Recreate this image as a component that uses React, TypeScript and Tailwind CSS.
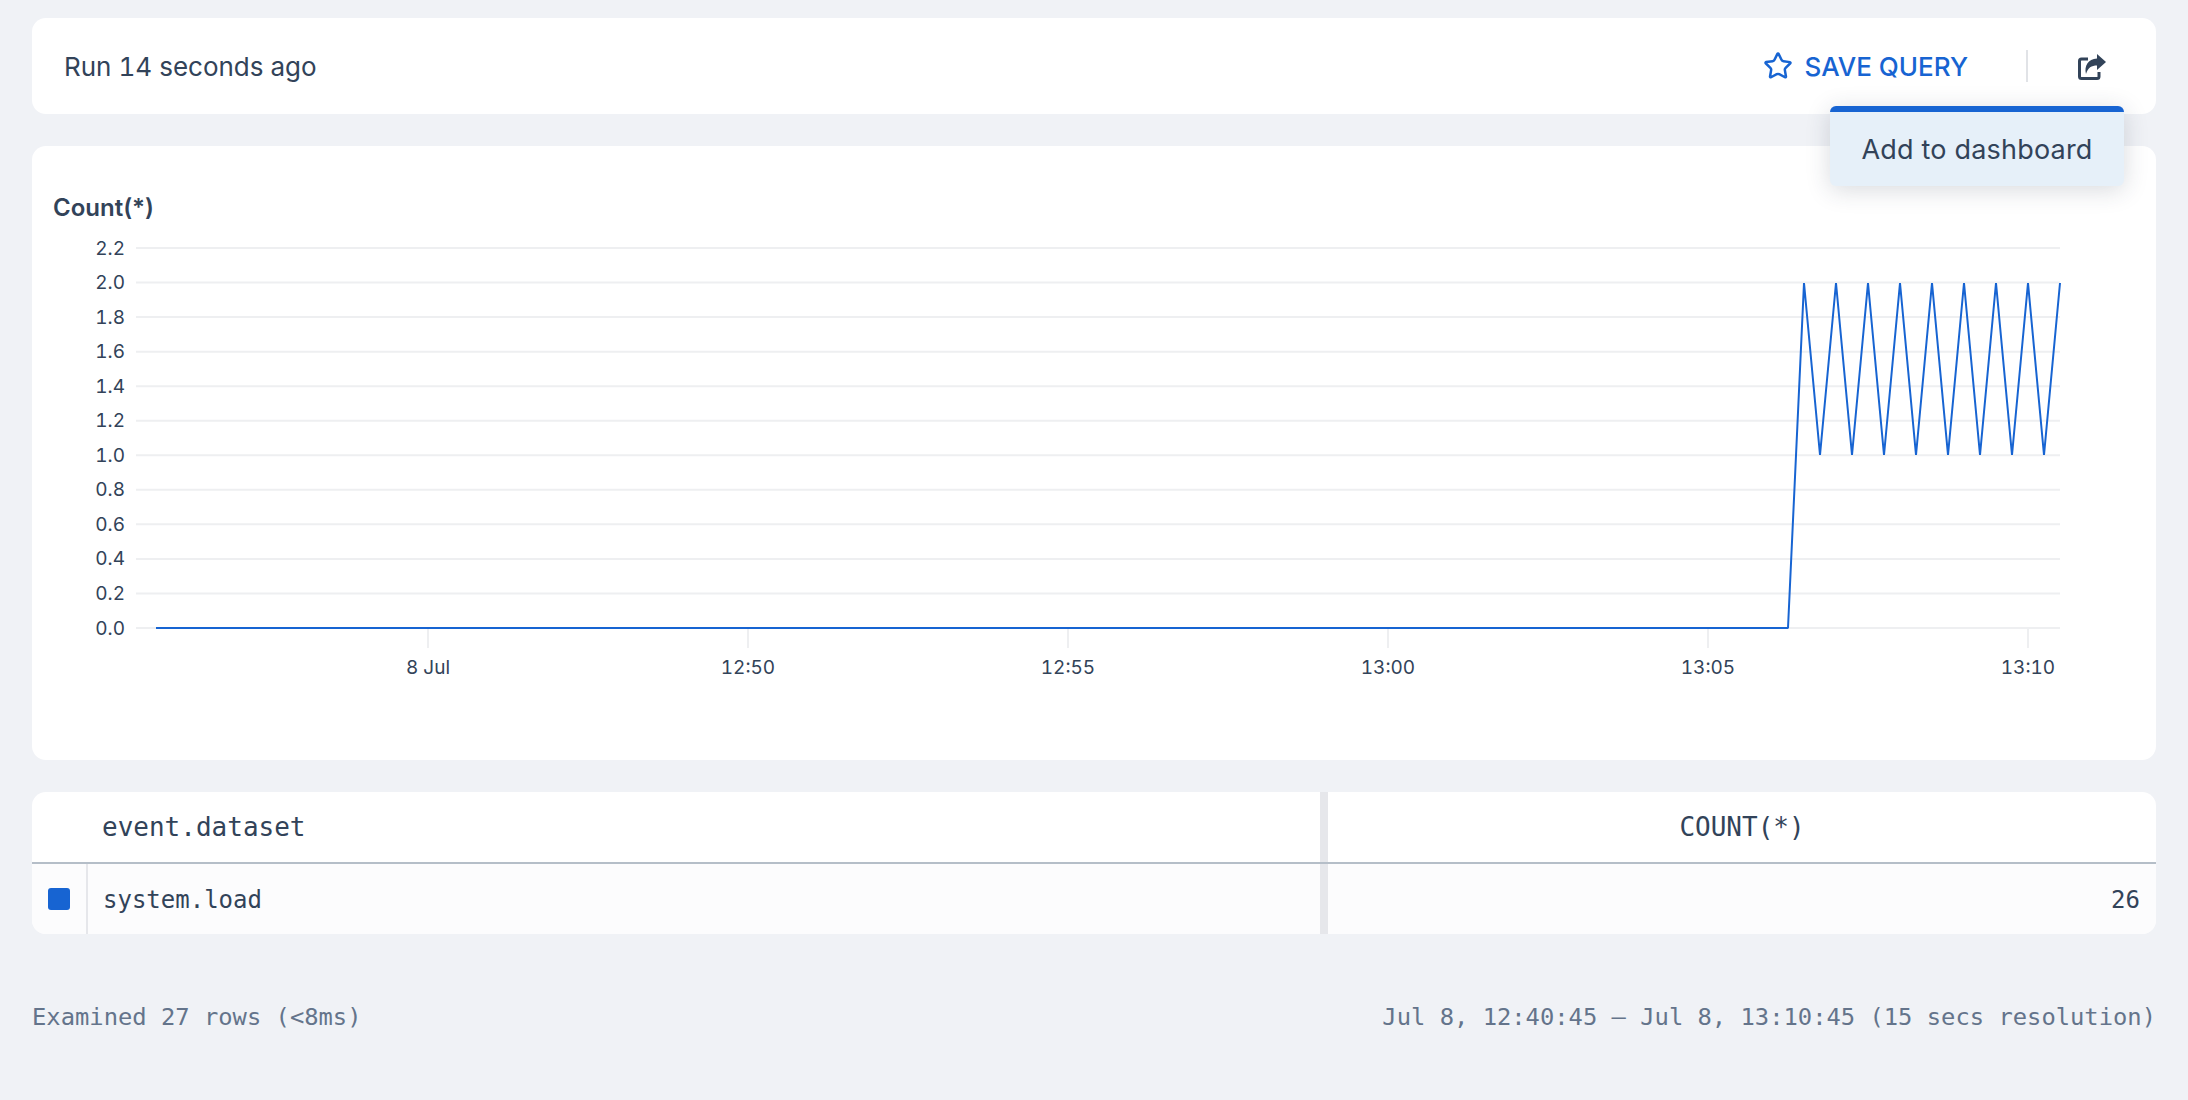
import { Star } from 'lucide-react'

const BLUE = '#1764d2'
const TEXT = '#324359'

const yLabels = ['2.2', '2.0', '1.8', '1.6', '1.4', '1.2', '1.0', '0.8', '0.6', '0.4', '0.2', '0.0']
const xTicks = [
  { x: 428, label: '8 Jul' },
  { x: 748, label: '12:50' },
  { x: 1068, label: '12:55' },
  { x: 1388, label: '13:00' },
  { x: 1708, label: '13:05' },
  { x: 2028, label: '13:10' }
]

const gridY = (i: number) => 248 + (i * 380) / 11

function linePoints() {
  const pts = ['156,628', '1788,628']
  for (let x = 1804; x <= 2060; x += 32) {
    pts.push(`${x},283`)
    if (x < 2060) pts.push(`${x + 16},455`)
  }
  return pts.join(' ')
}

function ShareIcon() {
  return (
    <svg width="28" height="26" viewBox="0 0 28 26" className="mt-[2px] block">
      <path
        d="M10 5 H3.5 A2 2 0 0 0 1.5 7 V22.5 A2 2 0 0 0 3.5 24.5 H19 A2 2 0 0 0 21 22.5 V18"
        fill="none"
        stroke={TEXT}
        strokeWidth={3}
      />
      <path d="M19 0 L28 8 L19 16 V11.5 C13.5 11.5 10 13.5 8 20 C6 12 10 5 19 4.5 Z" fill={TEXT} />
    </svg>
  )
}

function Chart() {
  return (
    <svg viewBox="32 224 2124 536" className="block w-full h-[536px] tabular-nums">
      {yLabels.map((label, i) => (
        <g key={label}>
          <line x1={136} x2={2060} y1={gridY(i)} y2={gridY(i)} stroke="#eeeff1" strokeWidth={2} />
          <text
            x={125}
            y={gridY(i)}
            textAnchor="end"
            dominantBaseline="central"
            fontSize={19}
            fill={TEXT}
            fontFamily="Inter, sans-serif"
          >
            {label}
          </text>
        </g>
      ))}
      {xTicks.map((t) => (
        <g key={t.label}>
          <line x1={t.x} x2={t.x} y1={628} y2={648} stroke="#eeeff1" strokeWidth={2} />
          <text
            x={t.x}
            y={667}
            textAnchor="middle"
            dominantBaseline="central"
            fontSize={19}
            fill={TEXT}
            fontFamily="Inter, sans-serif"
          >
            {t.label}
          </text>
        </g>
      ))}
      <polyline points={linePoints()} fill="none" stroke={BLUE} strokeWidth={2} strokeLinejoin="bevel" />
    </svg>
  )
}

export default function App() {
  return (
    <div className="min-h-[1100px] bg-[#f0f2f6] px-[32px] pt-[18px] text-[#324359] font-['Inter',sans-serif]">
      {/* Run bar */}
      <div className="relative flex h-[96px] items-center justify-between rounded-[14px] bg-white pl-[32px] pr-[50px]">
        <span className="text-[26px] tabular-nums">Run 14 seconds ago</span>
        <div className="flex items-center">
          <button className="flex items-center gap-[12px] text-[26px] font-medium text-[#1764d2]">
            <Star size={30} strokeWidth={2} />
            SAVE QUERY
          </button>
          <div className="ml-[58px] mr-[50px] h-[32px] w-[2px] bg-[#e1e3e7]" />
          <ShareIcon />
        </div>

        {/* Dropdown */}
        <div className="absolute left-[1798px] top-[88px] z-10 flex h-[80px] w-[294px] items-center justify-center rounded-[6px] border-t-[6px] border-[#1764d2] bg-[#e6f0f9] pt-[3px] text-[27px] tracking-[0.2px] shadow-[0_4px_24px_rgba(40,50,70,0.18)]">
          Add to dashboard
        </div>
      </div>

      {/* Chart */}
      <div className="mt-[32px] h-[614px] rounded-[14px] bg-white pt-[44px]">
        <div className="h-[34px] pl-[21px] pt-[1px] text-[24px] leading-[34px] font-semibold">Count(*)</div>
        <Chart />
      </div>

      {/* Table */}
      <div className="mt-[32px] overflow-hidden rounded-[14px] bg-white font-['DejaVu_Sans_Mono',monospace]">
        <div className="flex h-[72px] border-b-2 border-[#b5bec8]">
          <div className="flex w-[1288px] items-center pl-[70px] text-[26px]">event.dataset</div>
          <div className="w-[8px] bg-[#e6e7eb]" />
          <div className="flex flex-1 items-center justify-center text-[26px]">COUNT(*)</div>
        </div>
        <div className="flex h-[70px] bg-[#fcfcfd]">
          <div className="flex w-[56px] items-center justify-center border-r-2 border-[#e6e7eb]">
            <div className="h-[22px] w-[22px] rounded-[3px] bg-[#1764d2]" />
          </div>
          <div className="flex w-[1232px] items-center pl-[15px] pt-[1px] text-[24px]">system.load</div>
          <div className="w-[8px] bg-[#e6e7eb]" />
          <div className="flex flex-1 items-center justify-end pr-[16px] pt-[1px] text-[24px]">26</div>
        </div>
      </div>

      {/* Footer */}
      <div className="mt-[66px] flex justify-between font-['DejaVu_Sans_Mono',monospace] text-[23.8px] leading-[35px] text-[#64748b]">
        <span>Examined 27 rows (&lt;8ms)</span>
        <span>Jul 8, 12:40:45 – Jul 8, 13:10:45 (15 secs resolution)</span>
      </div>
    </div>
  )
}
